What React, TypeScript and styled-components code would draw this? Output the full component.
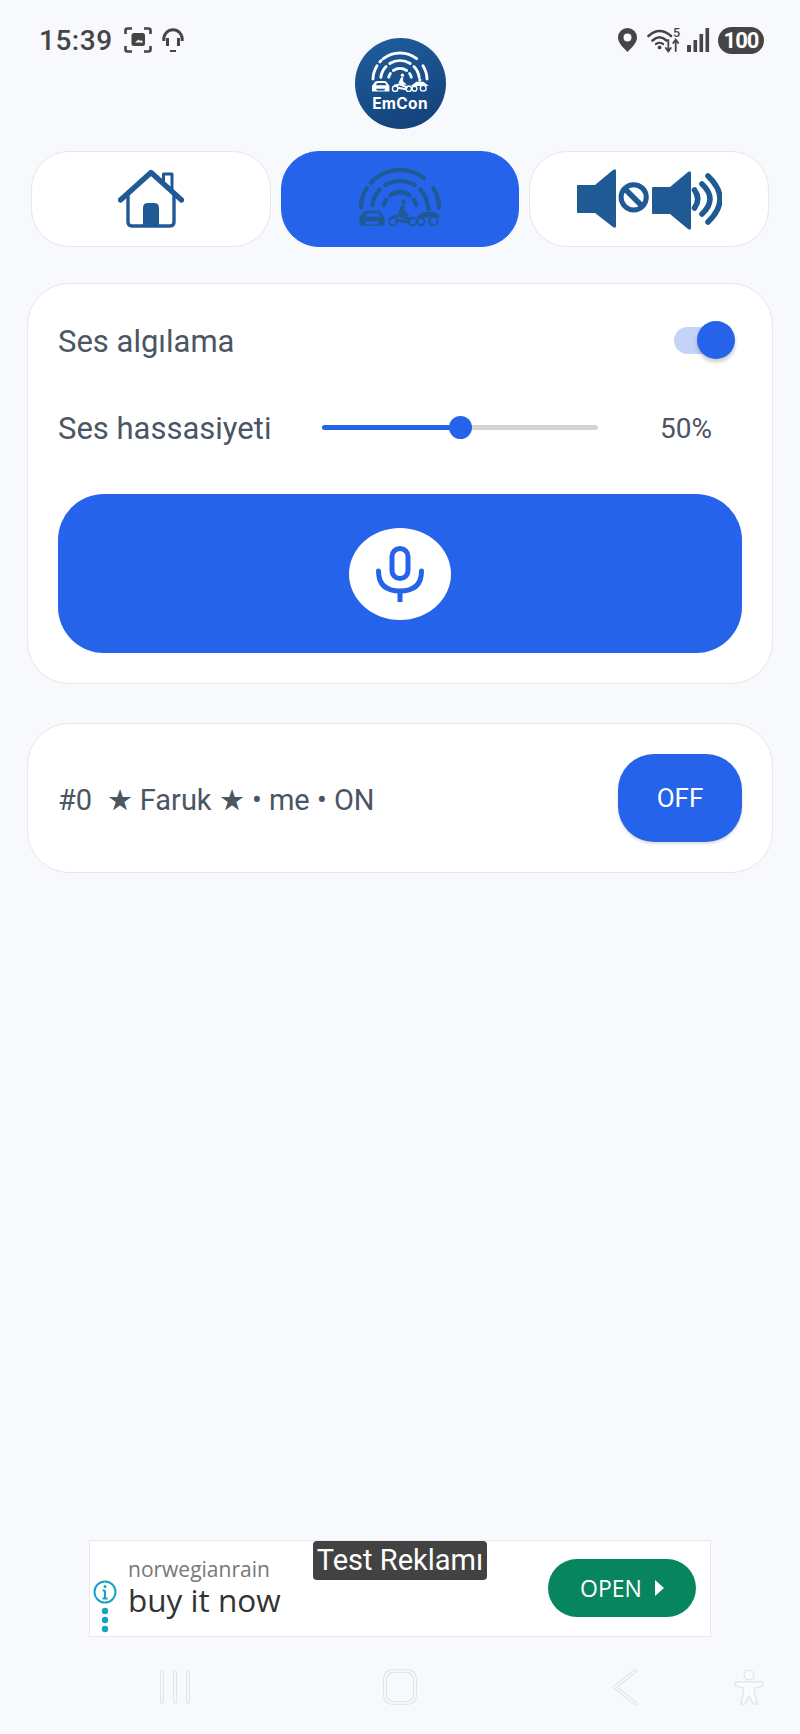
import styled, { createGlobalStyle } from "styled-components";

const GlobalStyle = createGlobalStyle`
    html, body {
        margin: 0;
        padding: 0;
        background-color: #f7f9fd;
    }

    * {
        box-sizing: border-box;
    }
`

const polar = (r: number, deg: number) => {
    const rad = (deg * Math.PI) / 180
    return `${(30 + r * Math.cos(rad)).toFixed(2)} ${(30 - r * Math.sin(rad)).toFixed(2)}`
}

const arc = (r: number, from: number, to: number) =>
    `M${polar(r, from)} A${r} ${r} 0 0 1 ${polar(r, to)}`

const ARCS: [number, number, number][] = [
    [28, 128, 52],
    [28, 178, 148],
    [28, 138, 134],
    [28, 32, 2],
    [20, 122, 58],
    [20, 172, 136],
    [20, 44, 8],
    [12, 125, 55],
    [12, 166, 146],
    [12, 34, 14],
]

const Mark = ({ color, cut, width }: { color: string; cut: string; width: number }) => (
    <svg width={width} viewBox="0 0 60 46" fill="none">
        <g stroke={color} strokeWidth="3" strokeLinecap="round">
            {ARCS.map(([r, from, to]) => (
                <path key={`${r}-${from}`} d={arc(r, from, to)} />
            ))}
        </g>
        {/* car */}
        <path d="M1 36 L4 32 Q5 31 7 31 H14 Q16 31 17 33 L19 36 V42 H1 Z" fill={color} />
        <path d="M5 35.5 L6.5 33 H14.5 L16 35.5 Z M5 39 H15 L13.5 41 H6.5 Z" fill={cut} />
        {/* motorbike */}
        <g stroke={color} fill="none">
            <circle cx="25" cy="39" r="2.8" strokeWidth="1.4" />
            <circle cx="39" cy="39" r="2.8" strokeWidth="1.4" />
            <path d="M24 36 L30 34.5 L38 38 M28 38 L36 39.5" strokeWidth="2.2" />
        </g>
        <path d="M28.5 33 L31 27.5 L33.5 27 L33 31 L37 35 L32 35 Z" fill={color} />
        <circle cx="32.5" cy="25" r="1.7" fill={color} />
        {/* quad */}
        <g stroke={color} fill="none">
            <circle cx="45" cy="39" r="2.5" strokeWidth="1.4" />
            <circle cx="54" cy="38.5" r="3" strokeWidth="1.4" />
            <path d="M43 35.5 H58 L54 32.5 H47 Z" fill={color} strokeWidth="1.2" />
        </g>
        <circle cx="50.5" cy="30" r="1.7" fill={color} />
    </svg>
)

const HomeIcon = () => (
    <svg width="66" height="60" viewBox="0 0 66 60" fill="none" stroke="#1f5a94">
        <path d="M45.5 13 V5 H54 V20" strokeWidth="3" strokeLinejoin="round" />
        <path d="M2.5 31 L33 3.5 L63.5 31" strokeWidth="5.4" strokeLinecap="round" strokeLinejoin="round" />
        <path d="M10 24 V53 Q10 57 14 57 H52 Q56 57 56 53 V24" strokeWidth="3.4" />
        <path d="M25 57 V39 Q25 34 30 34 H36 Q41 34 41 39 V57 Z" fill="#1f5a94" stroke="none" />
    </svg>
)

const SoundIcon = () => (
    <svg width="146" height="63" viewBox="-1 -1 146 63" fill="#1f5a94">
        <path d="M1 16 H18 L36 1 Q39 -1 39 2 V57 Q39 60 36 58 L18 44 H1 Q0 44 0 43 V17 Q0 16 1 16 Z" />
        <circle cx="56.7" cy="28.3" r="12.6" fill="#ffffff" stroke="#1f5a94" strokeWidth="5" />
        <path d="M48 20 L65 37" stroke="#1f5a94" strokeWidth="5.4" />
        <path d="M76 18 H93 L111 3 Q114 1 114 4 V59 Q114 62 111 60 L93 45 H76 Q75 45 75 44 V19 Q75 18 76 18 Z" />
        <g fill="none" stroke="#1f5a94" strokeWidth="5.6" strokeLinecap="round">
            <path d="M117.5 21 Q124 30 117.5 39" />
            <path d="M125 15 Q141 30 125 45" />
            <path d="M131 7 Q155 30 131 53" />
        </g>
    </svg>
)

const MicIcon = () => (
    <svg width="50" height="56" viewBox="0 0 50 56" fill="none" stroke="#2563eb" strokeWidth="5">
        <rect x="17" y="2.5" width="16" height="30" rx="8" />
        <path d="M3.5 25 Q3.5 45 25 45 Q46.5 45 46.5 25" strokeLinecap="round" />
        <path d="M25 45 V56" />
    </svg>
)

const ScanIcon = () => (
    <svg width="28" height="26" viewBox="0 0 28 26" fill="none" stroke="#454545" strokeWidth="2.6">
        <path d="M1.5 7 V3.5 Q1.5 1.5 3.5 1.5 H8 M20 1.5 H24.5 Q26.5 1.5 26.5 3.5 V7 M26.5 19 V22.5 Q26.5 24.5 24.5 24.5 H20 M8 24.5 H3.5 Q1.5 24.5 1.5 22.5 V19" />
        <rect x="7.5" y="6" width="13.5" height="13" rx="2.5" fill="#454545" stroke="none" />
        <path d="M11 15.5 L14.5 12.5 L16 14 L17.5 13 L19 15.5 Z" fill="#f7f9fd" stroke="none" />
    </svg>
)

const HeadsetIcon = () => (
    <svg width="22" height="25" viewBox="0 0 22 25" fill="none" stroke="#454545" strokeWidth="3">
        <path d="M1.8 13 V11 A9.2 9.2 0 0 1 20.2 11 V13" />
        <path d="M5.5 10 V18 M16.5 10 V18" />
        <path d="M8 23 H14" strokeWidth="2" />
    </svg>
)

const PinIcon = () => (
    <svg width="23" height="24" viewBox="0 0 23 24" fill="#454545">
        <path d="M9.5 0 A9.5 9.5 0 0 1 19 9.5 C19 15.5 12 21 9.5 24 C7 21 0 15.5 0 9.5 A9.5 9.5 0 0 1 9.5 0 Z M9.5 5.5 A4 4 0 1 0 9.5 13.5 A4 4 0 1 0 9.5 5.5 Z" fillRule="evenodd" />
    </svg>
)

const WifiIcon = () => (
    <svg width="34" height="28" viewBox="0 0 34 28" fill="none" stroke="#454545" strokeWidth="2.6" strokeLinecap="round">
        <path d="M1.5 10 Q12.5 0 24 10" />
        <path d="M5.5 14.5 Q12.5 8 19.5 14.5" />
        <path d="M9 18 Q12.5 15.5 16 18" strokeWidth="2.2" />
        <circle cx="12.6" cy="21.4" r="1.9" fill="#454545" stroke="none" />
        <path d="M21.3 14 V25 M18.8 22 L21.3 25.5 L23.8 22 M28.7 25 V14 M26.2 17 L28.7 13.5 L31.2 17" strokeWidth="1.8" />
        <text x="26" y="11" fontFamily="Roboto, sans-serif" fontSize="12.5" fontWeight="500" fill="#454545" stroke="none">5</text>
    </svg>
)

const SignalIcon = () => (
    <svg width="25" height="24" viewBox="0 0 25 24" fill="#454545">
        <rect x="0" y="17" width="4" height="7" rx="0.5" />
        <rect x="6.5" y="12" width="3.6" height="12" rx="0.5" />
        <rect x="12.5" y="6" width="3.6" height="18" rx="0.5" />
        <rect x="18.5" y="0" width="3.6" height="24" rx="0.5" />
    </svg>
)

const InfoIcon = () => (
    <svg width="24" height="56" viewBox="0 0 24 56" fill="none" stroke="#14a3c7">
        <circle cx="12" cy="12" r="10.5" strokeWidth="2" />
        <path d="M12 10.5 V18 M9.5 18.5 H14.5 M9.5 10.5 H12" strokeWidth="2" />
        <circle cx="12" cy="6.5" r="1.5" fill="#14a3c7" stroke="none" />
        <circle cx="12" cy="31" r="3.2" fill="#14a3c7" stroke="none" />
        <circle cx="12" cy="40" r="3.2" fill="#14a3c7" stroke="none" />
        <circle cx="12" cy="49" r="3.2" fill="#14a3c7" stroke="none" />
    </svg>
)

const NavLine = ({ d }: { d: string }) => (
    <>
        <path d={d} stroke="#e2e5ea" strokeWidth="4" strokeLinecap="round" strokeLinejoin="round" fill="none" />
        <path d={d} stroke="#fbfcfe" strokeWidth="1.6" strokeLinecap="round" strokeLinejoin="round" fill="none" />
    </>
)

const RecentsIcon = () => (
    <svg width="32" height="38" viewBox="0 0 32 38">
        <NavLine d="M3 4 V34" />
        <NavLine d="M16 4 V34" />
        <NavLine d="M29 4 V34" />
    </svg>
)

const NavHomeIcon = () => (
    <svg width="36" height="38" viewBox="0 0 36 38">
        <NavLine d="M12 3 H24 Q33 3 33 12 V26 Q33 35 24 35 H12 Q3 35 3 26 V12 Q3 3 12 3 Z" />
    </svg>
)

const BackIcon = () => (
    <svg width="26" height="38" viewBox="0 0 26 38">
        <NavLine d="M23 3 L3 19 L23 35" />
    </svg>
)

const AccessIcon = () => (
    <svg width="32" height="40" viewBox="0 0 32 40" fill="#fbfcfe" stroke="#e4e7eb" strokeWidth="1.6" strokeLinejoin="round">
        <circle cx="16" cy="7" r="4.8" />
        <path d="M2.5 14 H29.5 V18 L21.5 20 V26 L24.5 36 H20.5 L16 28 L11.5 36 H7.5 L10.5 26 V20 L2.5 18 Z" />
    </svg>
)

const App = () => {
    return <Page>
        <GlobalStyle />
        <TopBar>
            <StatusLeft>
                <Clock>15:39</Clock>
                <ScanIcon />
                <HeadsetIcon />
            </StatusLeft>
            <Logo>
                <Mark color="#ffffff" cut="#1a5290" width={58} />
                <LogoName>EmCon</LogoName>
            </Logo>
            <StatusRight>
                <PinIcon />
                <WifiIcon />
                <SignalIcon />
                <Battery>100</Battery>
            </StatusRight>
        </TopBar>

        <Tabs>
            <Tab><HomeIcon /></Tab>
            <Tab $active><Mark color="#1f5a94" cut="#2563eb" width={84} /></Tab>
            <Tab><SoundIcon /></Tab>
        </Tabs>

        <Card>
            <Row>
                <Label>Ses algılama</Label>
                <Switch>
                    <SwitchThumb />
                </Switch>
            </Row>
            <Row>
                <Label>Ses hassasiyeti</Label>
                <Slider $value={50}>
                    <SliderThumb $value={50} />
                </Slider>
                <Percent>50%</Percent>
            </Row>
            <TalkButton>
                <MicCircle><MicIcon /></MicCircle>
            </TalkButton>
        </Card>

        <UserCard>
            <UserName>#0&nbsp; ★ Faruk ★ • me • ON</UserName>
            <OffButton>OFF</OffButton>
        </UserCard>

        <Ad>
            <AdBadge>Test Reklamı</AdBadge>
            <AdInfo><InfoIcon /></AdInfo>
            <AdText>
                <AdSource>norwegianrain</AdSource>
                <AdTitle>buy it now</AdTitle>
            </AdText>
            <OpenButton>OPEN<OpenArrow /></OpenButton>
        </Ad>

        <NavBar>
            <RecentsIcon />
            <NavHomeIcon />
            <BackIcon />
            <AccessIcon />
        </NavBar>
    </Page>;
}

export default App

const Page = styled.div`
    width: 800px;
    height: 1734px;
    display: flex;
    flex-direction: column;
    background-color: #f7f9fd;
    font-family: Roboto, "Liberation Sans", sans-serif;
    color: #4b5563;
`

const TopBar = styled.div`
    display: grid;
    grid-template-columns: 1fr auto 1fr;
    align-items: start;
    padding: 26px 36px 0;
`

const StatusLeft = styled.div`
    display: flex;
    align-items: center;
    gap: 10px;
    height: 28px;
    padding-left: 3px;
`

const StatusRight = styled.div`
    display: flex;
    align-items: center;
    justify-content: flex-end;
    gap: 6px;
    height: 28px;
`

const Clock = styled.span`
    font-size: 28px;
    font-weight: 500;
    letter-spacing: 0.5px;
    color: #454545;
    margin-right: 1px;
`

const Battery = styled.span`
    width: 46px;
    height: 27px;
    border-radius: 14px;
    background-color: #454545;
    color: #ffffff;
    font-size: 22px;
    font-weight: 700;
    letter-spacing: -1px;
    line-height: 27px;
    text-align: center;
`

const Logo = styled.div`
    width: 91px;
    height: 91px;
    margin-top: 12px;
    border-radius: 50%;
    background: linear-gradient(160deg, #1f5f9e, #123f76);
    display: flex;
    flex-direction: column;
    align-items: center;
    padding-top: 13px;
`

const LogoName = styled.span`
    font-family: Inter, "Open Sans", sans-serif;
    font-size: 15.5px;
    font-weight: 700;
    line-height: 16px;
    letter-spacing: 0.3px;
    color: #ffffff;
    margin-top: 1px;
`

const Tabs = styled.div`
    display: grid;
    grid-template-columns: 240px 238px 240px;
    column-gap: 10px;
    margin-top: 22px;
    padding: 0 31px;
`

const Tab = styled.div<{ $active?: boolean }>`
    height: 96px;
    border-radius: 38px;
    border: 1px solid ${(p) => (p.$active ? "#2563eb" : "#e5e7eb")};
    background-color: ${(p) => (p.$active ? "#2563eb" : "#ffffff")};
    display: flex;
    align-items: center;
    justify-content: center;
`

const Card = styled.div`
    margin: 36px 27px 0;
    padding: 27px 30px 30px;
    border-radius: 42px;
    border: 1px solid #e5e7eb;
    background-color: #ffffff;
    display: flex;
    flex-direction: column;
    row-gap: 29px;
`

const Row = styled.div`
    height: 58px;
    display: flex;
    align-items: center;
`

const Label = styled.span`
    width: 264px;
    flex: none;
    margin-top: 3px;
    font-size: 31px;
    color: #4b5563;
`

const Switch = styled.div`
    position: relative;
    width: 46px;
    height: 27px;
    margin-left: auto;
    margin-right: 22px;
    border-radius: 14px;
    background-color: #c3d4f8;
`

const SwitchThumb = styled.div`
    position: absolute;
    top: -6px;
    right: -15px;
    width: 38px;
    height: 38px;
    border-radius: 50%;
    background-color: #2563eb;
    box-shadow: 0 3px 4px rgba(0, 0, 0, 0.22);
`

const Slider = styled.div<{ $value: number }>`
    position: relative;
    width: 276px;
    height: 5px;
    border-radius: 3px;
    background: linear-gradient(
        to right,
        #2563eb ${(p) => p.$value}%,
        #d4d4d4 ${(p) => p.$value}%
    );
`

const SliderThumb = styled.div<{ $value: number }>`
    position: absolute;
    top: -9px;
    left: calc(${(p) => p.$value}% - 11px);
    width: 23px;
    height: 23px;
    border-radius: 50%;
    background-color: #2563eb;
`

const Percent = styled.span`
    margin-left: auto;
    margin-right: 30px;
    margin-top: 3px;
    font-size: 28px;
    color: #4b5563;
`

const TalkButton = styled.div`
    height: 159px;
    margin-top: 9px;
    border-radius: 46px;
    background-color: #2563eb;
    display: flex;
    align-items: center;
    justify-content: center;
`

const MicCircle = styled.div`
    width: 102px;
    height: 92px;
    border-radius: 50%;
    background-color: #ffffff;
    display: flex;
    align-items: center;
    justify-content: center;
`

const UserCard = styled.div`
    margin: 39px 27px 0;
    height: 150px;
    padding: 0 30px;
    border-radius: 42px;
    border: 1px solid #e5e7eb;
    background-color: #ffffff;
    display: flex;
    align-items: center;
    justify-content: space-between;
`

const UserName = styled.span`
    margin-top: 4px;
    font-size: 29px;
    color: #4b5563;
`

const OffButton = styled.div`
    width: 124px;
    height: 88px;
    border-radius: 36px;
    background-color: #2563eb;
    box-shadow: 0 2px 3px rgba(0, 0, 0, 0.14);
    color: #ffffff;
    font-size: 26px;
    line-height: 88px;
    text-align: center;
`

const Ad = styled.div`
    position: relative;
    margin: auto 89px 0;
    height: 97px;
    padding: 0 14px 0 3px;
    border: 1px solid #e6e8ec;
    background-color: #ffffff;
    display: flex;
    align-items: center;
    column-gap: 11px;
`

const AdBadge = styled.div`
    position: absolute;
    top: 0;
    left: 223px;
    width: 174px;
    height: 39px;
    border-radius: 4px;
    background-color: #424242;
    color: #ffffff;
    font-size: 29px;
    line-height: 39px;
    text-align: center;
    white-space: nowrap;
`

const AdInfo = styled.div`
    align-self: flex-end;
    height: 56px;
`

const AdText = styled.div`
    display: flex;
    flex-direction: column;
    margin-top: -1px;
    font-family: "Open Sans", sans-serif;
`

const AdSource = styled.span`
    font-size: 21px;
    line-height: 24px;
    color: #777777;
`

const AdTitle = styled.span`
    font-size: 31.5px;
    line-height: 38px;
    color: #333333;
`

const OpenButton = styled.div`
    margin-left: auto;
    margin-top: -1px;
    width: 148px;
    height: 58px;
    border-radius: 29px;
    background-color: #07855f;
    color: #ffffff;
    font-family: "Open Sans", sans-serif;
    font-size: 23px;
    font-weight: 500;
    display: flex;
    align-items: center;
    justify-content: center;
    column-gap: 13px;
`

const OpenArrow = styled.span`
    width: 0;
    height: 0;
    border-top: 8px solid transparent;
    border-bottom: 8px solid transparent;
    border-left: 9px solid #ffffff;
`

const NavBar = styled.div`
    height: 97px;
    padding: 31px 0 0 159px;
    display: grid;
    grid-template-columns: 223px 230px 121px 32px;
    align-items: start;
`
